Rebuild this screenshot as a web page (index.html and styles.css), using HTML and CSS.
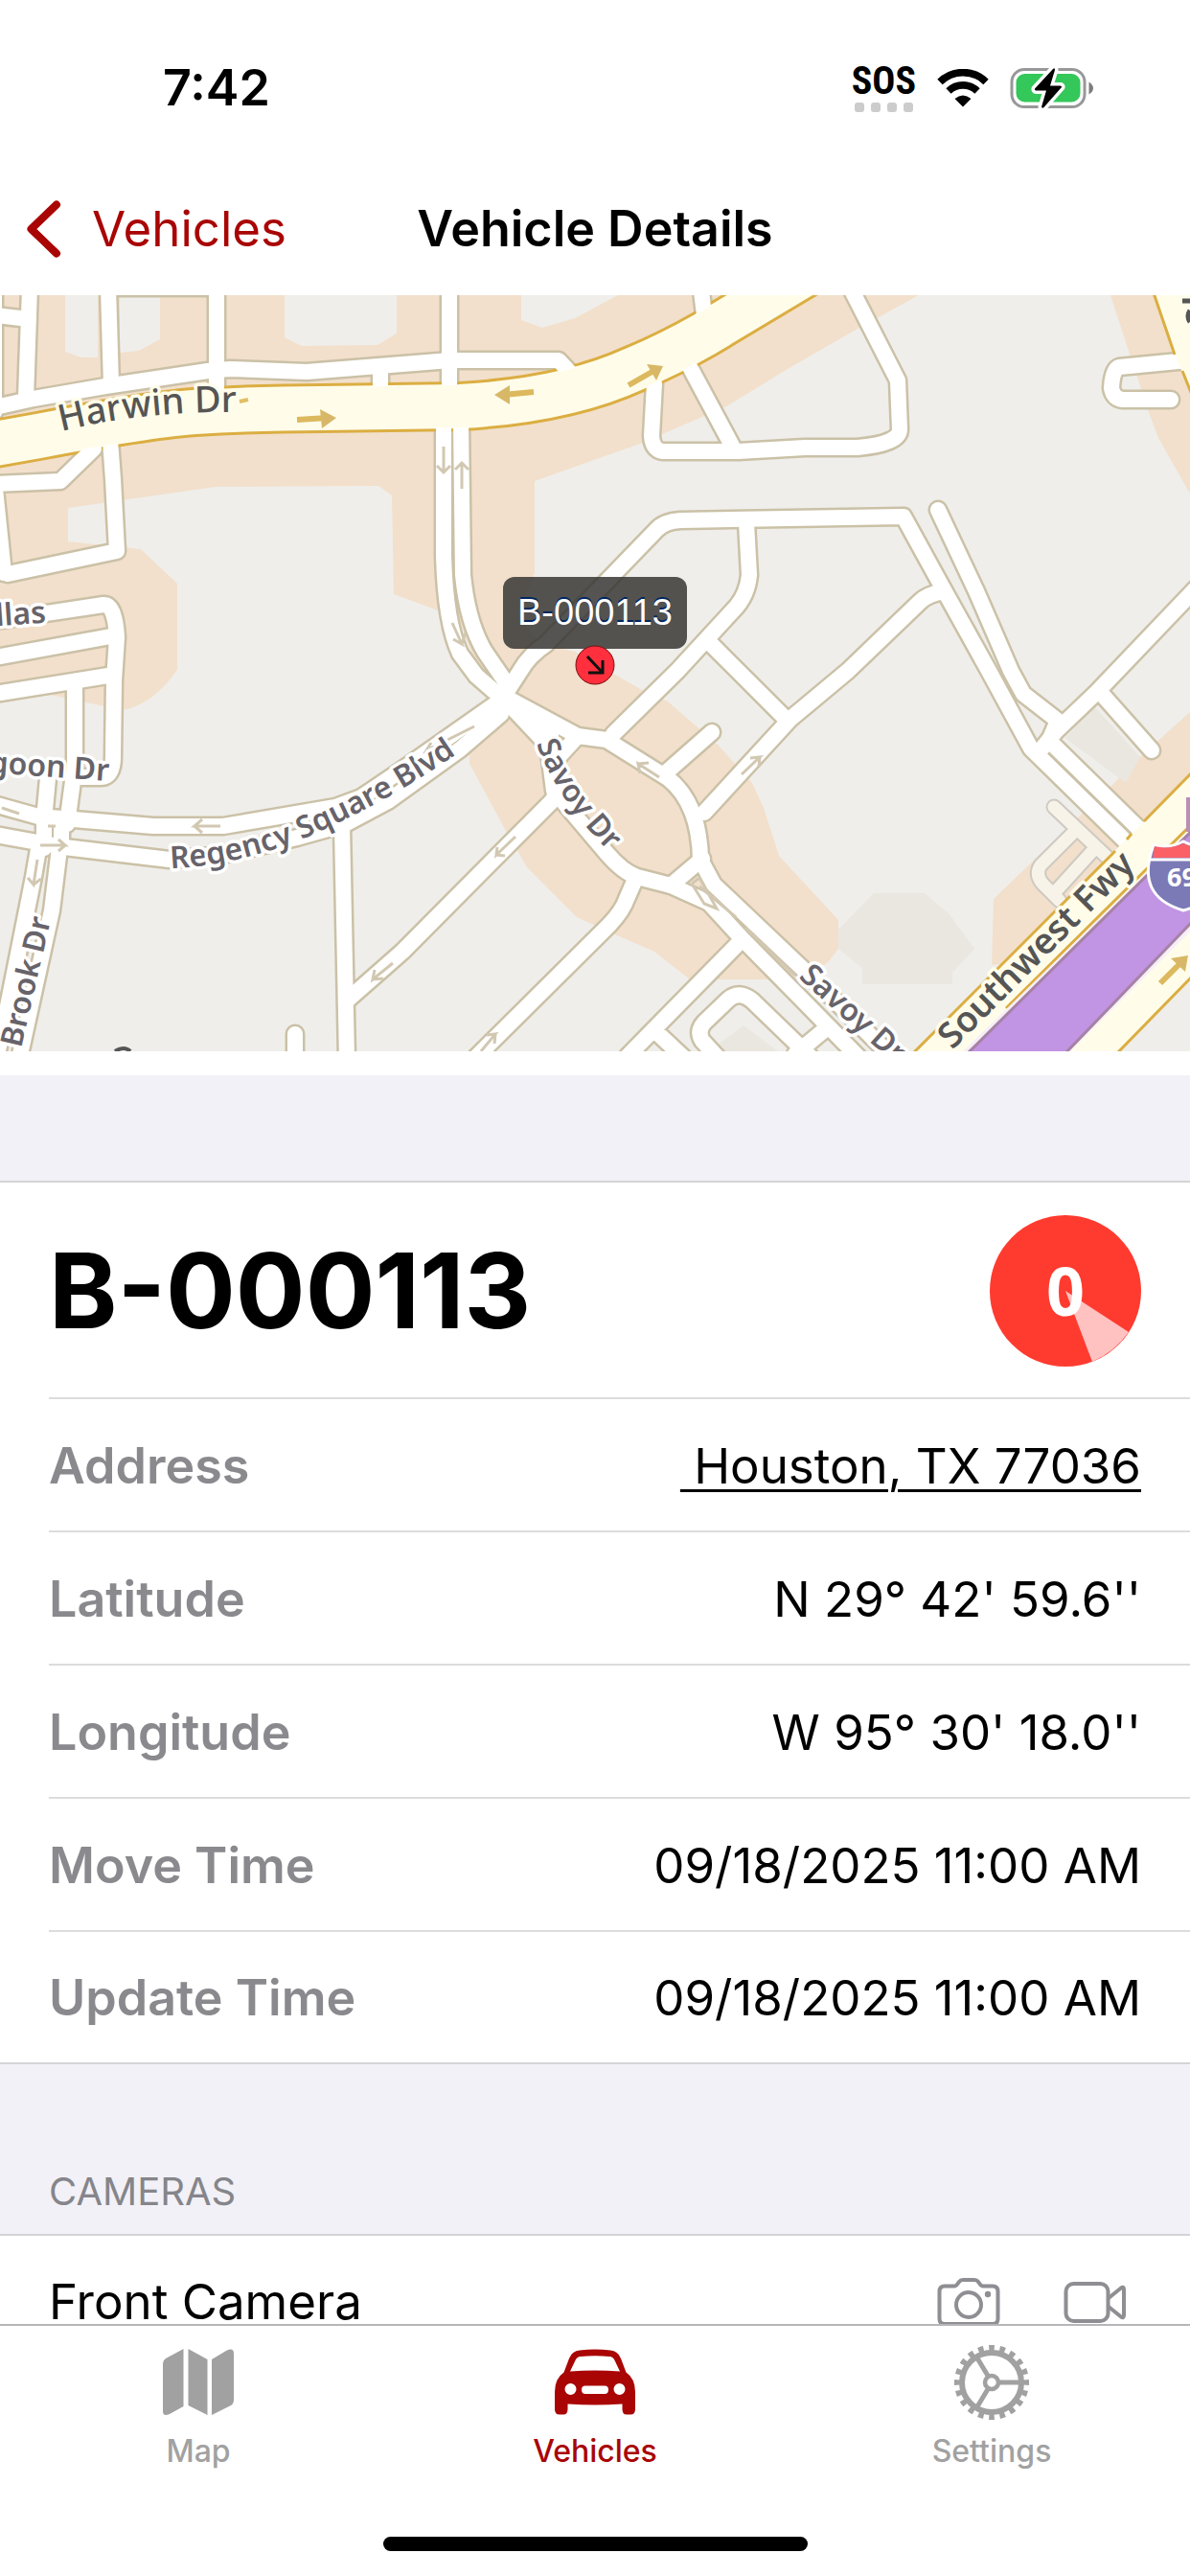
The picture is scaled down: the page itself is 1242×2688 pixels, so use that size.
FILE: index.html
```html
<!DOCTYPE html>
<html lang="en">
<head>
<meta charset="utf-8">
<meta name="viewport" content="width=device-width, initial-scale=1">
<title>Vehicle Details</title>
<link rel="stylesheet" href="styles.css">
</head>
<body>
<div class="app">
  <header class="header">
    <div class="status">
      <span class="time">7:42</span>
      <div class="indicators">
        <div class="signal">
          <span class="sos">SOS</span>
          <span class="dots"><i></i><i></i><i></i><i></i></span>
        </div>
        <svg class="wifi" viewBox="0 0 54 40" aria-hidden="true">
          <g fill="none" stroke="#000" stroke-width="7.600">
            <path d="M3 13.500A34 34 0 0 1 51 13.500"/>
            <path d="M12 23A21.500 21.500 0 0 1 42 23"/>
          </g>
          <path d="M27 39.500L18.500 31Q27 24 35.500 31Z"/>
        </svg>
        <svg class="battery" viewBox="0 0 88 44" aria-hidden="true">
          <rect x="2" y="2.500" width="76" height="39" rx="13" fill="none" stroke="#98989a" stroke-width="3"/>
          <rect x="6.500" y="7" width="67" height="29.500" rx="9" fill="#34c759"/>
          <path d="M82.500 15.500Q87 18.500 87 22Q87 25.500 82.500 28.500Z" fill="#7c7c80"/>
          <path d="M45 2L26 22.500Q25.500 24.500 28 24.500H38L33 41.500Q33.500 43.500 35.500 42L54 21Q54.500 19.500 52.500 19.500H42L47 3Q47 0 45 2Z" stroke="#fff" stroke-width="7" paint-order="stroke"/>
        </svg>
      </div>
    </div>
    <nav class="navbar">
      <a class="back" href="#vehicles">
        <svg class="chevron" viewBox="0 0 36 60" aria-hidden="true"><path d="M31 4.500L4.500 30L31 55.500"/></svg>
        <span>Vehicles</span>
      </a>
      <h1 class="title">Vehicle Details</h1>
    </nav>
  </header>

  <main class="content">
    <svg class="map" viewBox="0 308 1242 789" preserveAspectRatio="xMidYMid slice" role="img" aria-label="Map around B-000113">
      <defs>
        <g id="roads">
          <path d="M-6 300V430M-5 425L35 416L110 403L217 387L240 385L320 388L420 380L470 376H583L600 394"/>
          <path d="M31 300L27 415M-5 329L30 333M113 300L116 402M122 300H217M226 300V408M469 300V408M397 386V408M731 296L737 345"/>
          <path d="M-5 505L63 502L98 468M115 460L118 500L122 575L8 599M-5 510L4 598"/>
          <path d="M-5 648L108 631Q120 630 122 665L119 710L118 790Q118 811 105 811H84"/>
          <path d="M-5 686L121 663M-5 724L119 704M78 716V800L70 860M50 812L46 855"/>
          <path d="M-10 838L40 852L77 855L160 862H233L350 842L377 832L420 803L515 736"/>
          <path d="M-10 870L67 884L177 897L233 892L310 874L360 860L405 836L480 782L523 745"/>
          <path d="M46 860V885M64 860V885"/>
          <path d="M41 880L35 915L8 1050L-4 1105M62 885L54 950L20 1105"/>
          <path d="M357 862L362 1105M362 1044L420 993L575 837L586 822M308 1079V1105"/>
          <path d="M495 1105L636 965Q650 950 654 938L664 915"/>
          <path d="M463 440V580Q465 650 480 682L497 705L528 732M481 440L483 600Q488 650 506 680L530 715"/>
          <path d="M525 728L543 700Q552 684 570 672L685 553Q693 544 710 543L943 539L982 610L1032 700L1076 781L1180 883"/>
          <path d="M979 532L1019 617L1055 700L1068 724L1104 752L1095 773L1198 874"/>
          <path d="M1085 784L1102 763L1145 722L1250 612M1148 722L1202 783"/>
          <path d="M779 545L782 600Q780 622 765 637L707 700L640 766M738 668L818 748"/>
          <path d="M985 617Q968 620 960 628L885 700L825 750L735 848"/>
          <path d="M683 400L680 455Q681 470 692 471L770 471L840 467H895Q939 463 939 448L937 397L890 305M720 383L764 465"/>
          <path d="M1240 376L1168 383Q1161 385 1160 405Q1162 416 1172 417H1222"/>
          <path d="M525 726L603 768L633 772L697 812Q730 838 731 897L745 923L840 1013L930 1102"/>
          <path d="M525 728L572 778L578 825L633 890Q650 910 665 915L700 924L740 942L773 978L840 1046L895 1102"/>
          <path d="M603 768L580 793M733 896L700 924M693 808L743 764M773 982L655 1102M683 1075L715 1105"/>
          <path d="M755 1110L733 1086Q727 1076 735 1067L760 1043Q771 1033 785 1044L845 1102M830 1100L860 1075M530 735L575 768"/>
        </g>
        <path id="p-harwin" d="M64 450Q150 428 262 430"/>
        <path id="p-regency" d="M178 906Q260 903 346 862T500 770"/>
        <path id="p-savoy" d="M560 776Q585 845 660 912"/>
      </defs>

      <rect x="0" y="308" width="1242" height="789" fill="#efeeea"/>
      <g fill="#f2e0cc">
        <path d="M0 308H959L895 343L822 385L760 423L733 435L668 463L620 480L558 502V598L540 640L560 670L600 680L670 720L697 732L727 758L750 778L785 817L797 843L813 893L875 960V990L865 1003L840 1022H720L683 993L637 973L602 957L550 905L528 867L490 797V787L523 757L480 650L460 638L411 620L409 517L395 507L225 508L71 530V565L147 573L185 609V699Q160 735 128 741L0 714Z"/>
        <path d="M1159 308L1175 357L1200 433L1209 457L1242 515V308Z"/>
        <path d="M1037 938L1114 864L1162 818L1182 797L1242 743V860L1100 1000L1035 1007Z"/>
      </g>
      <path fill="#efeeea" d="M68 308H102V373H85L68 367ZM125 308H167V354L145 366L125 368ZM297 308H414V348L394 360L315 361L297 352ZM544 308H645L600 332L566 342L544 334Z"/>
      <path fill="#eae7e0" d="M912 932H965L990 953L1017 990L994 1015V1027H900V1010L875 990V970ZM1142 737L1190 790L1175 817L1112 770ZM740 1097L776 1070L812 1097Z"/>

      <g fill="none" stroke-linecap="round" stroke-linejoin="round">
        <g stroke="#cfcac1" stroke-width="17"><path d="M1100 842L1155 894M1119 870L1086 903Q1080 912 1088 922L1106 940M1142 886L1102 930"/></g>
        <g stroke="#f7f3e9" stroke-width="13"><path d="M1100 842L1155 894M1119 870L1086 903Q1080 912 1088 922L1106 940M1142 886L1102 930"/></g>
        <use href="#roads" stroke="#cbc1a7" stroke-width="21"/>
        <path d="M-10 464L40 455Q150 434 203 430Q270 426 335 426L480 424Q590 418 662 385Q700 369 735 349L845 283" stroke="#dbae42" stroke-width="52"/>
        <path d="M-10 464L40 455Q150 434 203 430Q270 426 335 426L480 424Q590 418 662 385Q700 369 735 349L845 283" stroke="#fffdea" stroke-width="46"/>
        <use href="#roads" stroke="#fff" stroke-width="16"/>
        <path d="M-10 464L40 455Q150 434 203 430Q270 426 335 426L480 424Q590 418 662 385Q700 369 735 349L845 283" stroke="#fffdea" stroke-width="44"/>
      </g>

      <path d="M1204 300L1227 372L1245 415V300Z" fill="#fffdea"/>
      <path d="M1202 300L1226 370M1234 387L1244 412" fill="none" stroke="#dbae42" stroke-width="3"/>
      <path d="M1234 314H1242M1242 324Q1238 330 1242 336" fill="none" stroke="#555" stroke-width="5"/>
      <path d="M120 1097Q130 1091 136 1097" fill="none" stroke="#555" stroke-width="4"/>

      <path d="M950 1102L1194 857L1250 800V1015L1162 1102Z" fill="#fffdea"/>
      <path d="M952 1100L1164 888M1176 876L1181 870M1194 857L1246 804M1165 1100L1246 1017M1050 1052L1246 858" fill="none" stroke="#dbae42" stroke-width="3"/>
      <path d="M1000 1102L1246 862V968L1112 1102Z" fill="#f6eef8"/>
      <path d="M1009 1100L1246 865V960L1111 1100Z" fill="#c294e4" stroke="#a682a4" stroke-width="3"/>
      <path d="M1240 832V868" stroke="#bb8fb4" stroke-width="4"/>

      <g fill="none" stroke="#d2c8b2" stroke-width="3">
        <path d="M463 466V493M456 486L463 493L470 486M482 510V483M475 490L482 483L489 490M472 650L482 672L473 667M482 672L486 660"/>
        <path d="M230 862H203L211 855M203 862L211 869M42 882H68L61 876M68 882L61 888M20 849L2 843M50 862H58M39 897L35 923L29 916M35 923L43 917"/>
        <path d="M495 758L445 783L450 775M445 783L455 783M538 873L518 892L519 884M518 892L527 893M410 1005L389 1022L391 1012M389 1022L400 1021"/>
        <path d="M688 811L666 797L668 807M666 797L677 796M774 808L793 790L783 791M793 790L792 800M502 1097L517 1079L508 1080M517 1079L516 1089M722 922L730 916L748 948L735 943L722 922M730 925L768 957M778 968L830 1018"/>
      </g>
      <g fill="none" stroke="#dcb95e" stroke-width="6">
        <path d="M310 438L342 436M557 409L525 412M656 402L684 386M1211 1026L1232 1005"/>
      </g>
      <path fill="#d8b868" d="M334 427L351 436L336 447ZM532 402L516 412L532 422ZM675 380L692 382L685 397ZM1222 1000L1240 997L1237 1014Z"/>
      <path d="M250 419L259 417" stroke="#e0bf66" stroke-width="4"/>

      <g class="street">
        <text class="street-lg"><textPath href="#p-harwin">Harwin Dr</textPath></text>
        <text x="-4" y="653" transform="rotate(-4 0 653)">llas</text>
        <text x="-12" y="807" transform="rotate(4 0 807)">goon Dr</text>
        <text><textPath href="#p-regency">Regency Square Blvd</textPath></text>
        <text><textPath href="#p-savoy">Savoy Dr</textPath></text>
        <text transform="translate(22 1094) rotate(-77)">Brook Dr</text>
        <text transform="translate(833 1020) rotate(42)">Savoy Dr</text>
        <text class="street-fwy" transform="translate(994 1096) rotate(-45)">Southwest Fwy</text>
      </g>

      <path d="M1204 882Q1220 886 1235 878Q1250 886 1262 882Q1290 935 1235 950Q1184 935 1204 882Z" fill="#7b7ab6" stroke="#fff" stroke-width="3"/>
      <path d="M1205 883Q1220 887 1235 880Q1250 887 1262 883V895H1203Z" fill="#fa6066"/>
      <path d="M1200 897H1262" stroke="#fff" stroke-width="3"/>
      <text class="shield" x="1218" y="925">69</text>

      <rect x="525" y="602" width="192" height="75" rx="12" fill="#353331" fill-opacity=".84"/>
      <text class="pin-label" x="621" y="652">B-000113</text>
      <circle cx="621" cy="694" r="20" fill="#ff2f3d" stroke="#711" stroke-width="1"/>
      <path d="M613 685L628 701M629 689V702H614" fill="none" stroke="#111" stroke-width="3"/>
    </svg>

    <section class="card summary">
      <div class="row hero">
        <h2 class="name">B-000113</h2>
        <svg class="gauge" viewBox="0 0 158 158" role="img" aria-label="Speed 0">
          <circle cx="79" cy="79" r="79" fill="#ff3b30"/>
          <path d="M79 79L145 122Q130 143 107 153Z" fill="#ffc2c1"/>
          <text class="speed" x="79" y="105">0</text>
        </svg>
      </div>
      <dl class="facts">
        <div class="row"><dt>Address</dt><dd><a class="address" href="#address"> Houston, TX 77036</a></dd></div>
        <div class="row"><dt>Latitude</dt><dd>N 29° 42' 59.6''</dd></div>
        <div class="row"><dt>Longitude</dt><dd>W 95° 30' 18.0''</dd></div>
        <div class="row"><dt>Move Time</dt><dd>09/18/2025 11:00 AM</dd></div>
        <div class="row"><dt>Update Time</dt><dd>09/18/2025 11:00 AM</dd></div>
      </dl>
    </section>

    <h3 class="section-title">CAMERAS</h3>
    <section class="card">
      <div class="row camera">
        <span>Front Camera</span>
        <div class="actions">
          <button class="icon-button" type="button" aria-label="Photo">
            <svg viewBox="0 0 66 50"><g fill="none" stroke="#8e8e93" stroke-width="4"><path d="M8 8.500H18Q20 8.500 21.500 6L23 4Q24.500 2 27 2H39Q41.500 2 43 4L44.500 6Q46 8.500 48 8.500H58Q63.500 8.500 63.500 14V42.500Q63.500 48 58 48H8Q2.500 48 2.500 42.500V14Q2.500 8.500 8 8.500Z"/><circle cx="33" cy="28" r="13"/></g><circle cx="53" cy="17" r="3.200" fill="#8e8e93"/></svg>
          </button>
          <button class="icon-button" type="button" aria-label="Video">
            <svg viewBox="0 0 66 50"><g fill="none" stroke="#8e8e93" stroke-width="4" stroke-linejoin="round"><rect x="2.500" y="6" width="44" height="39" rx="8"/><path d="M47 21L60 10.500Q63 8.500 63 12V39Q63 42.500 60 40.500L47 30"/></g></svg>
          </button>
        </div>
      </div>
    </section>
  </main>

  <footer class="tabbar">
    <nav class="tabs">
      <a class="tab" href="#map">
        <svg class="tab-icon" viewBox="0 0 88 80" aria-hidden="true"><path fill="currentColor" d="M7 21Q7 17 10 15L28.500 5V65L14 73Q7 76 7 70ZM33.500 5L53.500 16V74L33.500 64ZM58 16L73 7Q81 3 81 10V58Q81 62 78 64L58 74Z"/></svg>
        <span>Map</span>
      </a>
      <a class="tab active" href="#vehicles" aria-current="page">
        <svg class="tab-icon" viewBox="0 0 88 80" aria-hidden="true"><path fill="currentColor" fill-rule="evenodd" d="M28 6.500Q44 4.500 60 6.500Q68 7 71 15Q74 23 76.500 29.500Q86 36 86 50V68Q86 73.500 81 73.500H77Q72.500 73.500 72.500 68V62.500Q44 64.500 15.500 62.500V68Q15.500 73.500 11 73.500H7Q2 73.500 2 68V50Q2 36 11.500 29.500Q14 23 17 15Q20 7 28 6.500ZM29 13Q44 11.500 59 13Q63 13 65 18L70 28.500Q44 26.500 18 28.500L23 18Q25 13 29 13ZM18.500 41A6 6 0 1 0 18.500 53A6 6 0 1 0 18.500 41ZM69.500 41A6 6 0 1 0 69.500 53A6 6 0 1 0 69.500 41ZM34 43.500Q30 43.500 30 47.500Q30 52 34 52H54Q58 52 58 47.500Q58 43.500 54 43.500Z"/></svg>
        <span>Vehicles</span>
      </a>
      <a class="tab" href="#settings">
        <svg class="tab-icon" viewBox="0 0 88 80" aria-hidden="true">
          <g fill="none" stroke="currentColor">
            <circle cx="44" cy="40" r="31" stroke-width="6"/>
            <circle cx="44" cy="40" r="36" stroke-width="6" pathLength="100" stroke-dasharray="2.500 2.500" stroke-dashoffset="1.250"/>
            <circle cx="44" cy="40" r="7" stroke-width="4.500"/>
            <path d="M52 40H75M40 33L28 13M40 47L28 67" stroke-width="5"/>
          </g>
        </svg>
        <span>Settings</span>
      </a>
    </nav>
    <div class="home-bar"></div>
  </footer>
</div>
</body>
</html>
```
FILE: styles.css
```css
* { box-sizing: border-box; }

body {
  margin: 0;
  background: #fff;
  color: #000;
  font-family: Inter, "Liberation Sans", sans-serif;
  font-size: 51px;
  line-height: 60px;
}

a { color: inherit; text-decoration: none; }
h1, h2, h3, dl, dd { margin: 0; }

.app {
  display: grid;
  grid-template-rows: auto minmax(0, 1fr) auto;
  height: 100vh;
}

/* Status bar and navigation */
.status {
  display: flex;
  justify-content: space-between;
  align-items: center;
  height: 170px;
  padding: 14px 100px 0 170px;
}
.time { font-size: 52px; font-weight: 600; }
.indicators { display: flex; align-items: center; gap: 22px; }
.signal { display: flex; flex-direction: column; align-items: center; gap: 4px; }
.sos {
  font: 700 40px/36px "Liberation Sans Narrow", "Roboto Condensed", Roboto, sans-serif;
}
.dots { display: flex; gap: 7px; }
.dots i { width: 10px; height: 10px; border-radius: 3px; background: #ccc; }
.wifi { width: 54px; height: 40px; }
.battery { width: 88px; height: 44px; }

.navbar {
  display: grid;
  grid-template-columns: 1fr auto 1fr;
  align-items: center;
  height: 138px;
  padding: 0 28px;
}
.back { display: flex; align-items: center; gap: 32px; color: #a90505; }
.chevron { width: 36px; height: 60px; fill: none; stroke: currentColor; stroke-width: 8; stroke-linecap: round; stroke-linejoin: round; }
.title { font-size: 52px; font-weight: 600; }

/* Scrolling content */
.content { overflow: hidden auto; scrollbar-width: none; background: #f2f1f7; }
.map { display: block; width: 100%; height: auto; }

.street text {
  font-family: "Noto Sans", sans-serif;
  font-size: 32px;
  font-weight: 600;
  fill: #67636a;
  stroke: #fff;
  stroke-width: 7px;
  stroke-linejoin: round;
  paint-order: stroke;
}
.street .street-lg { font-size: 38px; font-weight: 500; fill: #555; stroke: #fffdea; }
.street .street-fwy { font-size: 37px; fill: #555; stroke: #fffdea; }
.shield { font: 700 27px "Noto Sans", sans-serif; fill: #fff; }
.pin-label {
  font: 38px "Liberation Sans", sans-serif;
  fill: #fff;
  text-anchor: middle;
  text-shadow: 0 -2px 0 #00265f;
}

.card { background: #fff; border-top: 2px solid #d4d4d7; border-bottom: 2px solid #d4d4d7; }
.summary { position: relative; margin-top: 135px; }
.summary::before {
  content: "";
  position: absolute;
  inset: -137px 0 auto;
  height: 25px;
  background: #fff;
}
.row {
  display: flex;
  justify-content: space-between;
  align-items: center;
  height: 139px;
  margin-left: 51px;
  padding-right: 51px;
  padding-top: 2px;
  border-bottom: 2px solid #dcdcde;
}
.row:last-child { height: 136px; border-bottom: 0; }
.row.hero { height: 226px; }
.name { font-size: 108px; line-height: 120px; font-weight: 700; }
.gauge { width: 158px; height: 158px; }
.speed { font: 700 70px "Noto Sans", sans-serif; fill: #fff; text-anchor: middle; }
dt { font-size: 52px; font-weight: 600; color: #8a8a8e; }
.address {
  white-space: pre;
  text-decoration: underline;
  text-decoration-thickness: 3px;
  text-underline-offset: 6px;
}

.section-title {
  padding: 107px 51px 18px;
  font-size: 40px;
  line-height: 52px;
  font-weight: 400;
  color: #85858a;
}
.row.camera { padding-right: 66px; }
.actions { display: flex; gap: 66px; }
.icon-button { display: flex; padding: 0; border: 0; background: none; }
.icon-button svg { width: 66px; height: 50px; }

/* Tab bar */
.tabbar {
  display: flex;
  flex-direction: column;
  justify-content: space-between;
  align-items: center;
  height: 263px;
  padding: 19px 0 26px;
  border-top: 2px solid #b6b6b8;
  background: #fff;
}
.tabs { display: grid; grid-template-columns: repeat(3, 1fr); width: 100%; }
.tab {
  display: flex;
  flex-direction: column;
  align-items: center;
  gap: 14px;
  color: #a1a1a1;
  font-size: 32px;
  line-height: 36px;
  font-weight: 500;
}
.tab.active { color: #a90505; }
.tab-icon { width: 88px; height: 80px; }
.home-bar { width: 100%; max-width: 443px; height: 15px; border-radius: 8px; background: #000; }
```
